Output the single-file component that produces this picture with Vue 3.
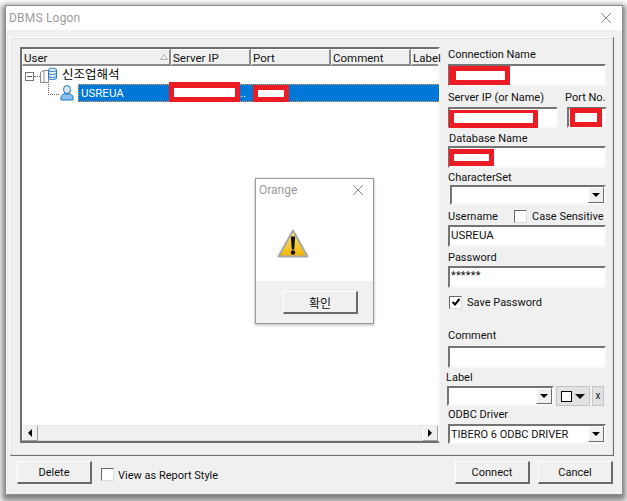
<script setup>
const columns = [
  { name: 'User', width: 149 },
  { name: 'Server IP', width: 80 },
  { name: 'Port', width: 80 },
  { name: 'Comment', width: 80 },
  { name: 'Label', width: 27 }
]
</script>

<template>
  <div class="window">
    <div class="titlebar">
      <span class="title">DBMS Logon</span>
      <svg class="close" width="14" height="14" viewBox="0 0 14 14"><path d="M2 2 L12 12 M12 2 L2 12" stroke="#8c8c8c" stroke-width="1" fill="none" /></svg>
    </div>
    <div class="content">
      <div class="panel">
        <div class="list">
          <div class="head">
            <div v-for="c in columns" :key="c.name" class="hcell" :style="{ width: c.width + 'px' }">
              {{ c.name }}
            </div>
            <svg class="sort" width="8" height="6" viewBox="0 0 8 6"><path d="M4 .5 L7.5 5.5 H.5 Z" fill="none" stroke="#b4b4b4" /></svg>
          </div>
          <div class="tree">
            <div class="row1">
              <span class="expander"></span>
              <span class="dots-h"></span>
              <svg class="srv" width="18" height="17" viewBox="0 0 18 17">
                <path d="M.5 5.5 L4 3.5 H8.5 V15.5 H.5 Z M4 3.5 V15.5" fill="#fff" stroke="#8a8a8a" />
                <path d="M8.5 2.5 C8.5 .8 16.5 .8 16.5 2.5 V11 C16.5 13 8.5 13 8.5 11 Z" fill="#e8f3fd" stroke="#2a78c8" />
                <path d="M8.5 3 C9 5 16 5 16.5 3 M8.5 6 C9 8 16 8 16.5 6 M8.5 9 C9 11 16 11 16.5 9" fill="none" stroke="#2a78c8" />
              </svg>
              <span class="rootname">신조업해석</span>
            </div>
            <div class="row2">
              <span class="dots-l"></span>
              <svg class="person" width="14" height="16" viewBox="0 0 14 16">
                <ellipse cx="7" cy="4.5" rx="3.5" ry="4" fill="#d8eafb" stroke="#1f74c8" />
                <path d="M1 15 V12 C1 10 4 9 5 8.5 C6 9.5 8 9.5 9 8.5 C10 9 13 10 13 12 V15 Z" fill="#8cc0ee" stroke="#1f74c8" />
              </svg>
              <div class="selected">
                <span class="sel-name">USREUA</span>
                <span class="sel-dots sd1">..</span>
                <span class="redact r-ip"></span>
                <span class="redact r-port"></span>
              </div>
            </div>
          </div>
          <div class="hscroll">
            <div class="sbtn"><svg width="6" height="8" viewBox="0 0 6 8"><path d="M5 0 V8 L1 4 Z" fill="#000" /></svg></div>
            <div class="strack"></div>
            <div class="sbtn"><svg width="6" height="8" viewBox="0 0 6 8"><path d="M1 0 V8 L5 4 Z" fill="#000" /></svg></div>
          </div>
        </div>

        <div class="form">
          <div class="lbl">Connection Name</div>
          <div class="field f-name mt3"><span class="redact r-conn"></span></div>

          <div class="split mt4">
            <span class="lbl">Server IP (or Name)</span>
            <span class="lbl portlbl">Port No.</span>
          </div>
          <div class="split mt3">
            <div class="field f-ip"><span class="redact r-sip"></span></div>
            <div class="field f-portno"><span class="redact r-pno"></span></div>
          </div>

          <div class="lbl mt3 ml1">Database Name</div>
          <div class="field mt1"><span class="redact r-db"></span></div>

          <div class="lbl mt2">CharacterSet</div>
          <div class="combo c-charset mt1">
            <span class="arrow"><i></i></span>
          </div>

          <div class="split mt4 userrow">
            <span class="lbl userlbl">Username</span>
            <span class="check"></span>
            <span class="lbl chk-text">Case Sensitive</span>
          </div>
          <div class="field mt2 val">USREUA</div>

          <div class="lbl mt3">Password</div>
          <div class="field mt2 val pw">******</div>

          <div class="split save">
            <span class="check on">
              <svg width="10" height="10" viewBox="0 0 10 10"><path d="M1.5 5 L4 7.5 L8.5 2" fill="none" stroke="#000" stroke-width="2" /></svg>
            </span>
            <span class="lbl chk-text">Save Password</span>
          </div>

          <div class="lbl comment">Comment</div>
          <div class="field mt4"></div>

          <div class="lbl mt2 nudge">Label</div>
          <div class="split labelrow mt2">
            <div class="combo c-label"><span class="arrow"><i></i></span></div>
            <div class="colorbtn"><span class="swatch"></span><i></i></div>
            <div class="xbtn">x</div>
          </div>

          <div class="lbl odbc">ODBC Driver</div>
          <div class="combo c-odbc mt3">
            <span class="val">TIBERO 6 ODBC DRIVER</span>
            <span class="arrow"><i></i></span>
          </div>
        </div>
      </div>

      <div class="footer">
        <button class="btn">Delete</button>
        <span class="check report"></span>
        <span class="lbl reporttext">View as Report Style</span>
        <span class="spacer"></span>
        <button class="btn">Connect</button>
        <button class="btn">Cancel</button>
      </div>
    </div>

    <div class="dialog">
      <div class="dlg-top">
        <div class="dlg-title">
          <span>Orange</span>
          <svg width="12" height="12" viewBox="0 0 12 12"><path d="M1 1 L11 11 M11 1 L1 11" stroke="#8c8c8c" fill="none" /></svg>
        </div>
        <svg class="warn" width="32" height="30" viewBox="0 0 32 30">
          <defs>
            <linearGradient id="wg" x1="0" y1="0" x2="0" y2="1">
              <stop offset="0" stop-color="#ffec7a" />
              <stop offset="1" stop-color="#f0b400" />
            </linearGradient>
          </defs>
          <path d="M16 1.5 L30.5 27.5 H1.5 Z" fill="url(#wg)" stroke="#a8a8a8" stroke-width="2" stroke-linejoin="round" />
          <path d="M13.8 7.5 H18.2 L17.2 20.5 H14.8 Z" fill="#111" />
          <circle cx="16" cy="23.5" r="2.2" fill="#111" />
        </svg>
      </div>
      <div class="dlg-bottom">
        <button class="btn dlg-btn">확인</button>
      </div>
    </div>
  </div>
</template>

<style>
html, body { margin: 0; background: #fff; min-height: 501px; overflow: hidden; }
</style>

<style scoped>
* { box-sizing: border-box; }
.window {
  position: relative;
  width: 618px;
  height: 490px;
  margin: 5px 0 0 5px;
  background: #f0f0f0;
  border: 1px solid #8d8d8d;
  box-shadow: 0 3px 6px 3px rgba(0, 0, 0, .5);
  font: 11px/14px Roboto, sans-serif;
  color: #111;
  overflow: visible;
}
.titlebar {
  height: 24px;
  background: #fff;
  display: flex;
  align-items: center;
  justify-content: space-between;
  padding: 0 9px 0 3px;
}
.title { color: #9b9b9b; font-size: 12px; letter-spacing: .2px; }
.content { padding: 7px 0 0 4px; }
.panel {
  width: 604px;
  height: 419px;
  padding: 9px 0 0 9px;
  display: flex;
  border: 1px solid;
  border-color: #fff #6f6f6f #6f6f6f #fff;
  border-right-width: 2px;
  border-bottom-width: 2px;
  outline: 1px solid #e2e2e2;
  outline-offset: -2px;
}
.list {
  width: 420px;
  height: 396px;
  border: 2px solid;
  border-color: #6e6e6e #f8f8f8 #6e6e6e #6e6e6e;
  background: #fff;
  display: flex;
  flex-direction: column;
  flex: none;
}
.head { height: 17px; display: flex; position: relative; flex: none; background: #f0f0f0; }
.hcell {
  flex: none;
  height: 17px;
  padding: 0 0 0 1px;
  background: #f0f0f0;
  border-top: 1px solid #fff;
  border-left: 1px solid #fff;
  border-right: 2px solid #8c8c8c;
  border-bottom: 2px solid #8c8c8c;
  font-size: 11.5px;
  line-height: 16px;
  white-space: nowrap;
}
.hcell:last-of-type { border-right: 0; }
.sort { position: absolute; left: 138px; top: 5px; }
.tree { flex: 1; padding-top: 1px; min-height: 0; }
.row1 { height: 17px; display: flex; align-items: center; padding-left: 3px; }
.expander {
  width: 9px;
  height: 9px;
  border: 1px solid #777;
  background: linear-gradient(#555, #555) center / 5px 1px no-repeat #fff;
  flex: none;
  margin-top: 1px;
}
.dots-h { width: 6px; border-top: 1px dotted #666; flex: none; margin-top: 1px; }
.srv { flex: none; margin: -1px 0 0 0; }
.rootname {
  margin-left: 4px;
  margin-top: -3px;
  font: 12.5px/16px "Noto Sans CJK KR", sans-serif;
  color: #000;
}
.row2 { height: 19px; display: flex; position: relative; padding-left: 38px; }
.dots-l {
  position: absolute;
  left: 26px;
  top: 0;
  width: 11px;
  height: 11px;
  border-left: 1px dotted #666;
  border-bottom: 1px dotted #666;
}
.person { flex: none; margin-top: 1px; }
.selected {
  flex: 1;
  margin-left: 4px;
  margin-right: -1px;
  height: 18px;
  background: #0078d7;
  border: 1px dotted #f0a040;
  border-right: 0;
  position: relative;
  color: #fff;
  font-size: 11.5px;
  line-height: 16px;
  padding-left: 2px;
}
.sel-dots { position: absolute; left: 161px; top: 1px; font-size: 11px; }
.redact {
  position: absolute;
  background: #fff;
  border: 5px solid #ed1c24;
  display: block;
}
.r-ip { left: 90px; top: -3px; width: 71px; height: 20px; border-width: 6px 5px 5px; }
.r-port { left: 174px; top: 0; width: 36px; height: 17px; border-width: 5px; }
.hscroll { height: 16px; flex: none; display: flex; background: #f0f0f0; border-top: 1px solid #e8e8e8; }
.sbtn {
  width: 16px;
  height: 15px;
  background: #f0f0f0;
  border-right: 1px solid #a0a0a0;
  border-left: 1px solid #fff;
  border-bottom: 1px solid #a0a0a0;
  display: flex;
  align-items: center;
  justify-content: center;
  flex: none;
}
.strack { flex: 1; background: #f0f0f0; border-right: 1px solid #e4e4e4; border-bottom: 1px solid #dcdcdc; }
.form { width: 158px; margin-left: 8px; display: flex; flex-direction: column; align-items: stretch; flex: none; }
.lbl { height: 14px; line-height: 16px; white-space: nowrap; color: #111; }
.mt1 { margin-top: 1px; }
.mt2 { margin-top: 2px; }
.mt3 { margin-top: 3px; }
.mt4 { margin-top: 4px; }
.ml1 { margin-left: 1px; }
.field {
  height: 22px;
  background: #fff;
  border: 2px solid;
  border-color: #747474 #f8f8f8 #f8f8f8 #747474;
  position: relative;
  flex: none;
}
.val { font-size: 11.5px; line-height: 17px; padding-left: 1px; color: #111; }
.pw { font-size: 11px; line-height: 15px; letter-spacing: .2px; }
.split { display: flex; flex: none; position: relative; }
.f-ip { width: 110px; height: 21px; }
.f-portno { width: 40px; height: 21px; margin-left: 9px; }
.portlbl { margin-left: 21px; }
.r-conn { left: -1px; top: 0; width: 61px; height: 19px; border-width: 5px 5px 5px 7px; }
.r-sip { left: -1px; top: 1px; width: 89px; height: 18px; border-width: 3px 5px 5px; }
.r-pno { left: 1px; top: -1px; width: 32px; height: 19px; }
.r-db { left: -1px; top: 1px; width: 45px; height: 17px; }
.combo {
  height: 20px;
  background: #fff;
  border: 2px solid;
  border-color: #747474 #f8f8f8 #f8f8f8 #747474;
  position: relative;
  flex: none;
}
.c-charset { margin-left: 2px; }
.c-label { width: 107px; margin-left: -1px; }
.c-odbc .val { font-size: 11px; line-height: 18px; white-space: nowrap; }
.arrow {
  position: absolute;
  right: 0;
  top: 0;
  width: 16px;
  height: 16px;
  background: #f0f0f0;
  border: 1px solid;
  border-color: #fff #6e6e6e #6e6e6e #fff;
  display: flex;
  align-items: center;
  justify-content: center;
}
.arrow i, .colorbtn i {
  display: block;
  width: 0;
  height: 0;
  border: 4px solid transparent;
  border-top: 4px solid #000;
  border-bottom: 0;
}
.userrow { align-items: center; }
.userlbl { width: 66px; }
.check {
  width: 13px;
  height: 13px;
  flex: none;
  background: #fff;
  border: 1px solid;
  border-color: #6a6a6a #ddd #ddd #6a6a6a;
  display: inline-flex;
  align-items: center;
  justify-content: center;
}
.chk-text { margin-left: 5px; }
.save { margin-top: 7px; margin-left: 1px; height: 14px; align-items: center; }
.comment { margin-top: 19px; }
.nudge { margin-left: -2px; }
.labelrow { height: 20px; }
.colorbtn {
  width: 34px;
  height: 20px;
  margin-left: 2px;
  background: #e2e2e2;
  border: 1px solid #c4c4c4;
  display: flex;
  align-items: center;
  justify-content: center;
  gap: 3px;
}
.colorbtn i { border-width: 5px 5px 0; border-top-color: #111; }
.swatch { width: 11px; height: 11px; background: #fff; border: 1px solid #000; }
.xbtn {
  width: 12px;
  height: 20px;
  margin-left: 2px;
  background: #e2e2e2;
  border: 1px solid #c4c4c4;
  line-height: 18px;
  text-align: center;
  font-size: 10px;
}
.odbc { margin-top: 1px; }
.footer { display: flex; align-items: flex-start; padding: 5px 0 0 7px; width: 603px; }
.btn {
  width: 75px;
  height: 23px;
  padding: 2px 0 0;
  background: #f0f0f0;
  border: 1px solid;
  border-color: #fff #6a6a6a #6a6a6a #fff;
  border-right-width: 2px;
  border-bottom-width: 2px;
  font: 11px/18px Roboto, sans-serif;
  color: #111;
}
.report { margin: 7px 0 0 9px; }
.reporttext { margin: 7px 0 0 4px; }
.spacer { flex: 1; }
.footer .btn + .btn { margin-left: 8px; }
.dialog {
  position: absolute;
  left: 249px;
  top: 172px;
  width: 119px;
  height: 146px;
  border: 1px solid #9a9a9a;
  box-shadow: 0 1px 3px rgba(0, 0, 0, .3);
  background: #f0f0f0;
  display: flex;
  flex-direction: column;
}
.dlg-top { height: 102px; background: #fff; position: relative; flex: none; }
.dlg-title {
  display: flex;
  justify-content: space-between;
  align-items: center;
  padding: 3px 9px 0 3px;
  font-size: 12px;
  line-height: 16px;
  color: #9b9b9b;
}
.warn { position: absolute; left: 21px; top: 50px; }
.dlg-bottom { padding: 10px 0 0 27px; }
.dlg-btn { font: 12px/18px "Noto Sans CJK KR", sans-serif; }
</style>
